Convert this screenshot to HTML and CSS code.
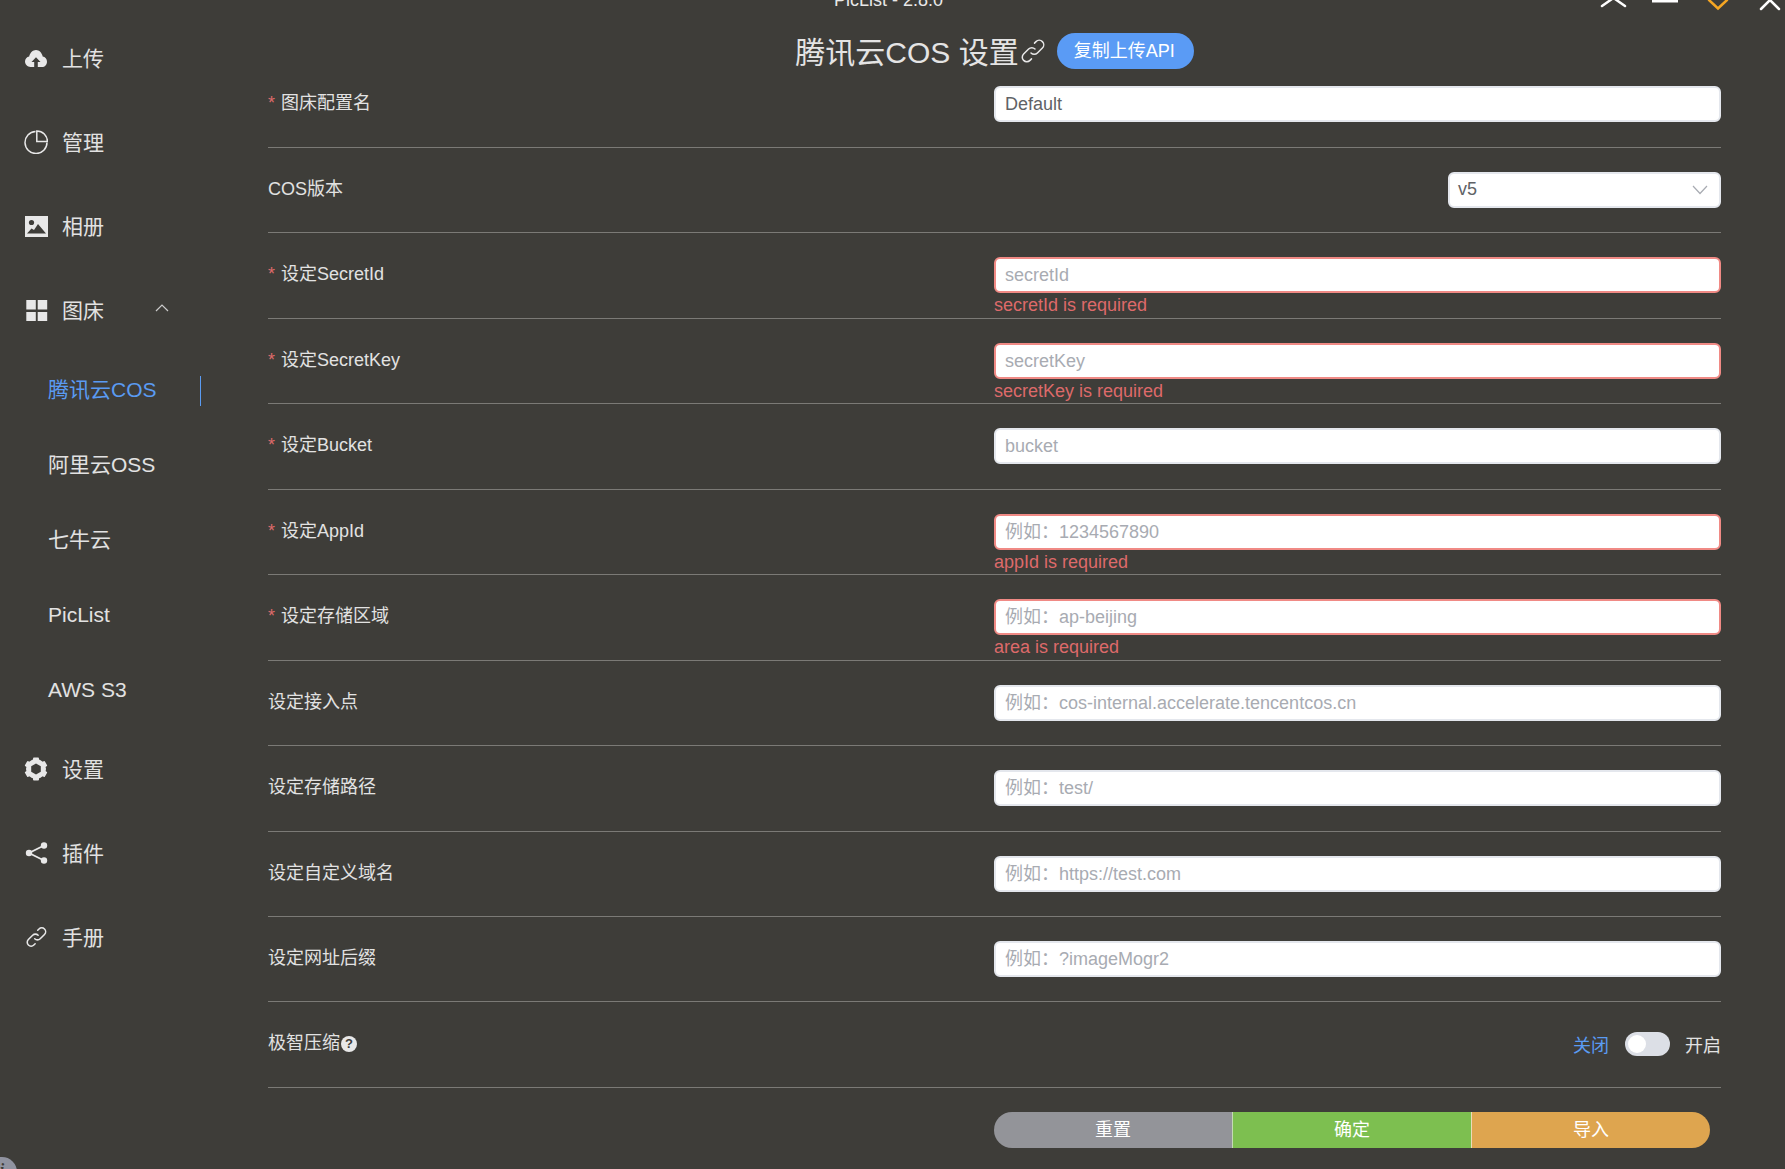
FILE: index.html
```html
<!DOCTYPE html>
<html lang="zh-CN">
<head>
    <meta charset="UTF-8">
    <meta name="viewport" content="width=device-width, initial-scale=1.0">
    <title>PicList - 2.8.0</title>
    <link rel="stylesheet" href="styles.css">
</head>
<body>
    <div class="app-title">PicList - 2.8.0</div>
    <svg class="window-controls" width="185" height="12" viewBox="0 0 185 12" fill="none" stroke-width="2.5" stroke-linecap="round">
        <path d="M2 6L12 -1M25 6L15 -1" stroke="#fff"/>
        <path d="M52 0H78" stroke="#fff" stroke-width="5" stroke-linecap="butt"/>
        <path d="M109 0L118 8.5L127 0" stroke="#f5a623"/>
        <path d="M161 9L170 0L179 9" stroke="#fff"/>
    </svg>

    <div class="layout">
        <nav class="sidebar">
            <div class="nav-item">
                <svg class="nav-icon" viewBox="0 0 24 24"><path d="M6.500 21C3.500 21 1 18.600 1 15.600C1 12.900 2.800 10.800 5.200 10.400C6 6.800 8.800 4 12 4C15.200 4 17.900 6.800 18.700 10.400C21.200 10.800 23 12.900 23 15.700C23 18.700 20.800 21 18 21H13.800V16H16.500L12 11.200L7.500 16H10.200V21Z" fill="#e8e8e8"/></svg>
                <span>上传</span>
            </div>
            <div class="nav-item">
                <svg class="nav-icon" viewBox="0 0 24 24" fill="none" stroke="#e8e8e8" stroke-width="1.500"><path d="M11.500 1.500A11 11 0 1 0 23 12.500"/><path d="M12.800 0.900A10.600 10.600 0 0 1 23.400 11.500H12.800Z"/></svg>
                <span>管理</span>
            </div>
            <div class="nav-item">
                <svg class="nav-icon" viewBox="0 0 24 24"><rect x="1" y="2" width="23" height="21" fill="#e8e8e8"/><circle cx="7.500" cy="8.500" r="2.600" fill="#3e3d39"/><path d="M3 19.500L7.500 14.500L10 16L14 10L22 19.500Z" fill="#3e3d39"/></svg>
                <span>相册</span>
            </div>
            <div class="nav-item">
                <svg class="nav-icon" viewBox="0 0 24 24" fill="#e8e8e8"><rect x="2.300" y="2" width="9.500" height="9.500"/><rect x="13.700" y="2" width="9.500" height="9.500"/><rect x="2.300" y="14" width="9.500" height="9"/><rect x="13.700" y="14" width="9.500" height="9"/></svg>
                <span>图床</span>
                <svg class="nav-arrow" width="14" height="8" viewBox="0 0 14 8" fill="none" stroke="#ccc" stroke-width="1.200"><path d="M1 7L7 1L13 7"/></svg>
            </div>
            <div class="sub-item active cjk">腾讯云COS</div>
            <div class="sub-item cjk">阿里云OSS</div>
            <div class="sub-item cjk">七牛云</div>
            <div class="sub-item">PicList</div>
            <div class="sub-item">AWS S3</div>
            <div class="nav-item">
                <svg class="nav-icon" viewBox="0 0 24 24" fill="#e8e8e8">
                    <circle cx="12" cy="12" r="10"/>
                    <rect x="9" y="0.500" width="6" height="23" rx="1"/>
                    <rect x="9" y="0.500" width="6" height="23" rx="1" transform="rotate(60 12 12)"/>
                    <rect x="9" y="0.500" width="6" height="23" rx="1" transform="rotate(120 12 12)"/>
                    <path d="M12 6.500L16.800 9.250V14.750L12 17.500L7.200 14.750V9.250Z" fill="#3e3d39"/>
                </svg>
                <span>设置</span>
            </div>
            <div class="nav-item">
                <svg class="nav-icon" viewBox="0 0 24 24"><path d="M20 4.500L5 12L20 19.500" fill="none" stroke="#e8e8e8" stroke-width="1.800"/><circle cx="20" cy="4.500" r="3.200" fill="#e8e8e8"/><circle cx="5" cy="12" r="3.200" fill="#e8e8e8"/><circle cx="20" cy="19.500" r="3.200" fill="#e8e8e8"/></svg>
                <span>插件</span>
            </div>
            <div class="nav-item">
                <svg class="nav-icon" viewBox="-2.500 -2 28 28" fill="none" stroke="#e8e8e8" stroke-width="1.800" stroke-linecap="round"><path d="M10 14a4.500 4.500 0 0 0 6.400 0l5-5a4.500 4.500 0 0 0 -6.400 -6.400l-1.500 1.500"/><path d="M14 10a4.500 4.500 0 0 0 -6.400 0l-5 5a4.500 4.500 0 0 0 6.400 6.400l1.500 -1.500"/></svg>
                <span>手册</span>
            </div>
        </nav>

        <main class="content">
            <div class="page-title">
                <span class="page-name">腾讯云COS 设置</span>
                <svg class="title-link" width="24" height="24" viewBox="0 0 24 24" fill="none" stroke="#e8e8e8" stroke-width="1.500" stroke-linecap="round"><path d="M10 14a4.500 4.500 0 0 0 6.400 0l5-5a4.500 4.500 0 0 0 -6.400 -6.400l-1.500 1.500"/><path d="M14 10a4.500 4.500 0 0 0 -6.400 0l-5 5a4.500 4.500 0 0 0 6.400 6.400l1.500 -1.500"/></svg>
                <div class="copy-btn">复制上传API</div>
            </div>

            <div class="form">
                <div class="row">
                    <div class="label required">图床配置名</div>
                    <div class="field"><div class="input filled">Default</div></div>
                </div>
                <div class="row">
                    <div class="label">COS版本</div>
                    <div class="field field-right">
                        <div class="select">
                            <span class="select-value">v5</span>
                            <svg width="16" height="10" viewBox="0 0 16 10" fill="none" stroke="#a8abb2" stroke-width="1.200"><path d="M1 1L8 8.500L15 1"/></svg>
                        </div>
                    </div>
                </div>
                <div class="row">
                    <div class="label required">设定SecretId</div>
                    <div class="field">
                        <div class="input invalid">secretId</div>
                        <div class="error">secretId is required</div>
                    </div>
                </div>
                <div class="row">
                    <div class="label required">设定SecretKey</div>
                    <div class="field">
                        <div class="input invalid">secretKey</div>
                        <div class="error">secretKey is required</div>
                    </div>
                </div>
                <div class="row">
                    <div class="label required">设定Bucket</div>
                    <div class="field"><div class="input">bucket</div></div>
                </div>
                <div class="row">
                    <div class="label required">设定AppId</div>
                    <div class="field">
                        <div class="input invalid">例如：1234567890</div>
                        <div class="error">appId is required</div>
                    </div>
                </div>
                <div class="row">
                    <div class="label required">设定存储区域</div>
                    <div class="field">
                        <div class="input invalid">例如：ap-beijing</div>
                        <div class="error">area is required</div>
                    </div>
                </div>
                <div class="row">
                    <div class="label">设定接入点</div>
                    <div class="field"><div class="input">例如：cos-internal.accelerate.tencentcos.cn</div></div>
                </div>
                <div class="row">
                    <div class="label">设定存储路径</div>
                    <div class="field"><div class="input">例如：test/</div></div>
                </div>
                <div class="row">
                    <div class="label">设定自定义域名</div>
                    <div class="field"><div class="input">例如：https://test.com</div></div>
                </div>
                <div class="row">
                    <div class="label">设定网址后缀</div>
                    <div class="field"><div class="input">例如：?imageMogr2</div></div>
                </div>
                <div class="row">
                    <div class="label">极智压缩<span class="help">?</span></div>
                    <div class="field field-switch">
                        <span class="switch-off">关闭</span>
                        <div class="switch"><div class="switch-knob"></div></div>
                        <span class="switch-on">开启</span>
                    </div>
                </div>
            </div>

            <div class="actions">
                <div class="action reset">重置</div>
                <div class="action confirm">确定</div>
                <div class="action import">导入</div>
            </div>
        </main>
    </div>

    <div class="info-badge">i</div>
</body>
</html>
```

FILE: styles.css
```css
body, html {
    margin: 0;
    padding: 0;
    height: 100%;
    overflow: hidden;
    font-family: "Liberation Sans", "Noto Sans CJK SC", sans-serif;
    font-size: 18px;
    color: #e2e2e2;
    background: #3e3d39;
}

.app-title {
    position: absolute;
    top: -10px;
    left: 834px;
    line-height: 20px;
    color: #e8e8e8;
}

.window-controls {
    position: absolute;
    top: 0;
    right: 0;
}

.layout {
    display: flex;
    height: 100vh;
}

/* left menu */
.sidebar {
    flex: 0 0 201px;
    padding-top: 16px;
    box-sizing: border-box;
}

.nav-item {
    display: flex;
    align-items: center;
    height: 84px;
    padding-left: 24px;
    font-size: 21px;
}

.nav-item span {
    padding-bottom: 2px;
}

.nav-icon {
    width: 24px;
    height: 24px;
    margin-right: 14px;
}

.nav-arrow {
    margin-left: 51px;
    margin-bottom: 4px;
}

.sub-item {
    display: flex;
    align-items: center;
    height: 75px;
    box-sizing: border-box;
    padding-left: 48px;
    font-size: 21px;
    position: relative;
}

.sub-item.cjk {
    padding-bottom: 4px;
}

.sub-item.active {
    color: #5a9bf2;
}

.sub-item.active::after {
    content: "";
    position: absolute;
    right: 0;
    top: 24px;
    width: 1.500px;
    height: 30px;
    background: #5a9bf2;
}

/* main form */
.content {
    flex: 1;
    padding: 33px 64px 0 67px;
    min-width: 0;
}

.page-title {
    display: flex;
    align-items: center;
    justify-content: center;
    height: 36px;
    font-size: 30px;
    color: #e4e4e4;
}

.page-name {
    padding-bottom: 2px;
}

.title-link {
    margin-left: 2px;
    margin-right: 12px;
}

.copy-btn {
    height: 36px;
    line-height: 36px;
    padding: 0 19px 0 17px;
    border-radius: 18px;
    background: #5a9bf5;
    color: #fff;
    font-size: 18px;
}

.row {
    display: flex;
    height: 85.450px;
    box-sizing: border-box;
    padding-top: 24px;
    border-bottom: 1px solid #7b7a76;
}

.row:first-child {
    height: 79px;
    padding-top: 17px;
}

.label {
    flex: 0 0 726px;
    line-height: 34px;
}

.label.required::before {
    content: "*";
    margin-right: 6px;
    color: #dd6a6a;
}

.help {
    display: inline-block;
    width: 16px;
    height: 16px;
    margin-left: 1px;
    border-radius: 50%;
    background: #e8e8e8;
    color: #3e3d39;
    font-size: 13px;
    font-weight: bold;
    line-height: 16px;
    text-align: center;
    vertical-align: 1px;
}

.field {
    flex: 1;
    min-width: 0;
}

.field-right {
    display: flex;
    justify-content: flex-end;
}

.field-switch {
    display: flex;
    align-items: center;
    justify-content: flex-end;
    height: 36px;
}

.input, .select {
    height: 36px;
    line-height: 32px;
    box-sizing: border-box;
    padding: 0 9px;
    border: 2px solid #e4e7ed;
    border-radius: 6px;
    background: #fff;
    color: #a8abb2;
}

.input.filled, .select {
    color: #606266;
}

.input.invalid {
    border-color: #f08a85;
}

.select {
    display: flex;
    align-items: center;
    justify-content: space-between;
    width: 273px;
    padding: 0 11px 0 8px;
}

.select-value {
    padding-bottom: 2px;
}

.error {
    line-height: 24px;
    color: #dd6a6a;
}

.switch-off {
    color: #5a9bf2;
    margin-right: 1px;
}

.switch {
    width: 45px;
    height: 24px;
    margin: 0 15px 0 15px;
    padding: 3px;
    box-sizing: border-box;
    border-radius: 12px;
    background: #dcdfe6;
}

.switch-knob {
    width: 18px;
    height: 18px;
    border-radius: 50%;
    background: #fff;
}

.actions {
    display: flex;
    width: 716px;
    height: 36px;
    margin: 24px 0 0 726px;
    border-radius: 18px;
    overflow: hidden;
    color: #fff;
}

.action {
    flex: 1;
    box-sizing: border-box;
    line-height: 37px;
    text-align: center;
}

.reset {
    background: #939499;
}

.confirm {
    background: #7dbf50;
    border-left: 1px solid #c4dbb4;
}

.import {
    background: #dea54f;
    border-left: 1px solid #eadcb8;
}

.info-badge {
    position: absolute;
    left: -13px;
    top: 1157px;
    width: 30px;
    height: 30px;
    border-radius: 50%;
    background: #9093a0;
    color: #3e3d39;
    font-family: "Liberation Serif", serif;
    font-size: 16px;
    font-style: italic;
    font-weight: bold;
    line-height: 26px;
    text-align: center;
}
```
